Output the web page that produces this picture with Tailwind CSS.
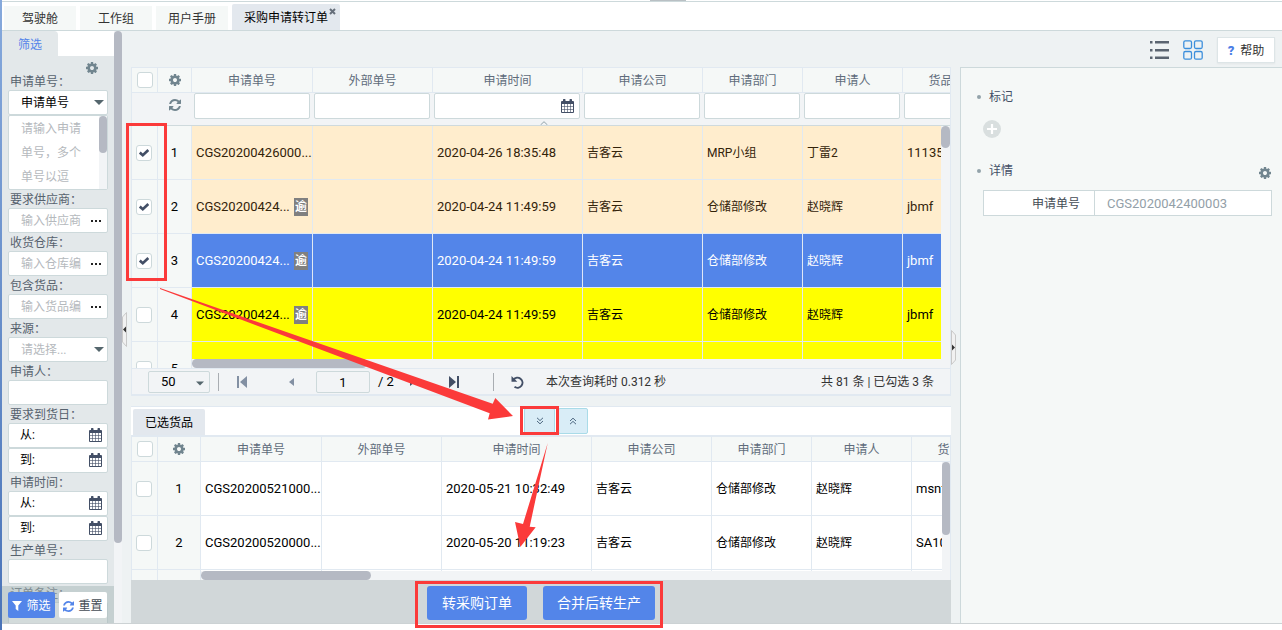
<!DOCTYPE html>
<html lang="zh-CN">
<head>
<meta charset="utf-8">
<title>采购申请转订单</title>
<script src="https://cdn.jsdelivr.net/npm/@tailwindcss/browser@4"></script>
</head>
<body class="relative flex h-screen flex-col overflow-hidden bg-white font-['Roboto','Noto_Sans_CJK_SC',sans-serif] text-xs leading-4 text-black">
<svg class="hidden" aria-hidden="true">
  <symbol id="cog" viewBox="0 128 1536 1536"><path fill="currentColor" d="M1024 896q0-106-75-181t-181-75-181 75-75 181 75 181 181 75 181-75 75-181zm512-109v222q0 12-8 23t-20 13l-185 28q-19 54-39 91 35 50 107 138 10 12 10 25t-9 23q-27 37-99 108t-94 71q-12 0-26-9l-138-108q-44 23-91 38-16 136-29 186-7 28-36 28h-222q-14 0-24.5-8.5t-11.5-21.5l-28-184q-49-16-90-37l-141 107q-10 9-25 9-14 0-25-11-126-114-165-168-7-10-7-23 0-12 8-23 15-21 51-66.5t54-70.5q-27-50-41-99l-183-27q-13-2-21-12.5t-8-23.5v-222q0-12 8-23t19-13l186-28q14-46 39-92-40-57-107-138-10-12-10-24 0-10 9-23 26-36 98.5-107.5t94.5-71.5q13 0 26 10l138 107q44-23 91-38 16-136 29-186 7-28 36-28h222q14 0 24.5 8.5t11.5 21.5l28 184q49 16 90 37l142-107q9-9 24-9 13 0 25 10 129 119 165 170 7 8 7 22 0 12-8 23-15 21-51 66.5t-54 70.5q26 50 41 98l183 28q13 2 21 12.5t8 23.5z"/></symbol>
  <symbol id="refresh" viewBox="128 128 1536 1536"><path fill="currentColor" d="M1639 1056q0 5-1 7-64 268-268 434.5t-478 166.5q-146 0-282.5-55t-243.5-157l-129 129q-19 19-45 19t-45-19-19-45v-448q0-26 19-45t45-19h448q26 0 45 19t19 45-19 45l-137 137q71 66 161 102t187 36q134 0 250-65t186-179q11-17 53-117 8-23 30-23h192q13 0 22.5 9.5t9.5 22.5zm25-800v448q0 26-19 45t-45 19h-448q-26 0-45-19t-19-45 19-45l138-138q-148-137-349-137-134 0-250 65t-186 179q-11 17-53 117-8 23-30 23h-199q-13 0-22.5-9.5t-9.5-22.5v-7q65-268 270-434.5t480-166.5q146 0 284 55.5t245 156.5l130-129q19-19 45-19t45 19 19 45z"/></symbol>
  <symbol id="cal" viewBox="0 0 13 14"><path fill="currentColor" fill-rule="evenodd" d="M2 2V1a1 1 0 0 1 2.500 0v1h4V1A1 1 0 0 1 11 1v1h1a1 1 0 0 1 1 1v10a1 1 0 0 1-1 1H1a1 1 0 0 1-1-1V3a1 1 0 0 1 1-1zM1 5v8h11V5z"/><path stroke="currentColor" stroke-opacity=".6" d="M3.500 5v8M6.500 5v8M9.500 5v8M1 7.500h11M1 10.500h11"/></symbol>
  <symbol id="caret" viewBox="0 0 10 5"><path fill="currentColor" d="M0 0h10L5 5z"/></symbol>
  <symbol id="check" viewBox="0 0 10 8"><path fill="none" stroke="currentColor" stroke-width="2.600" d="M.8 3.600 3.800 6.200 9.300 1"/></symbol>
  <symbol id="tri" viewBox="0 0 5 8"><path fill="currentColor" d="M5 0v8L0 4z"/></symbol>
  <symbol id="edge" viewBox="0 0 10 12"><path fill="currentColor" d="M0 0h2v12H0zM10 0v12L3 6z"/></symbol>
  <symbol id="chev" viewBox="0 0 8 8"><path fill="none" stroke="currentColor" d="M1 .8 4 3.600 7 .8M1 4 4 6.800 7 4"/></symbol>
</svg>

<div class="absolute inset-y-0 left-0 w-0.5 bg-linear-to-b from-[#86a9dc] to-[#4a74b8]"></div>
<div class="absolute top-0 left-[650px] z-10 h-px w-9 bg-[#b9c0c4]"></div>

<nav class="mt-px ml-0.5 flex h-[30px] shrink-0 items-end gap-1 border-t border-b border-[#cdd9db] pl-0.5 text-[#333]">
  <a href="#" class="flex h-6 w-[72px] items-center justify-center bg-[#f5f8f7] pt-0.5">驾驶舱</a>
  <a href="#" class="flex h-6 w-[72px] items-center justify-center bg-[#f5f8f7] pt-0.5">工作组</a>
  <a href="#" class="flex h-6 w-[72px] items-center justify-center bg-[#f5f8f7] pt-0.5">用户手册</a>
  <a href="#" class="relative flex h-[26px] w-[108px] items-center justify-center rounded-t-xs bg-[#e3e8ee] pt-0.5 text-black">采购申请转订单
    <svg class="absolute top-1 right-1 size-[7px] text-[#666f7a]" viewBox="0 0 7 7"><path stroke="currentColor" stroke-width="2" d="m1 1 5 5M6 1 1 6"/></svg></a>
</nav>

<div class="mb-1.5 ml-0.5 flex min-h-0 flex-1 border-b border-[#ccd2d4] bg-[#eef2f3]">
  <aside class="relative flex w-28 shrink-0 flex-col overflow-hidden bg-[#e3e8ea] text-[#57626e]">
    <div class="flex h-[25px] shrink-0 bg-white"><button class="w-14 rounded-tr-sm bg-[#e3e8ea] pt-0.5 text-[#5385e9]">筛选</button></div>
    <form class="flex shrink-0 flex-col px-1.5 [&_input]:min-w-0 [&_input]:flex-1 [&_input]:outline-none [&_label]:h-[18px] [&_label]:pl-0.5 [&_label]:leading-[21px]">
      <div class="flex h-4 items-end justify-end pr-2.5"><button type="button" aria-label="设置" class="h-3"><svg class="mt-0.5 size-3 text-[#71858f]"><use href="#cog"/></svg></button></div>
      <label for="f1">申请单号：</label>
      <div class="relative"><select id="f1" class="h-[25px] w-full appearance-none rounded-xs border border-[#cdd9db] bg-white pl-3 text-black"><option>申请单号</option></select><svg class="pointer-events-none absolute top-2.5 right-1 h-[5px] w-2.5 text-[#55666d]"><use href="#caret"/></svg></div>
      <div class="relative flex"><textarea aria-label="申请单号内容" class="h-[75px] w-full resize-none overflow-hidden rounded-xs border border-[#cdd9db] bg-white pt-px pl-3 leading-6 outline-none placeholder:text-[#b5b9bd]" placeholder="请输入申请&#10;单号，多个&#10;单号以逗"></textarea><div class="absolute inset-y-px right-px w-2 bg-[#f2f4f6]"><div class="h-[37px] rounded-full bg-[#b5b9c3]"></div></div></div>
      <label for="f2">要求供应商：</label>
      <div class="flex h-[25px] items-center rounded-xs border border-[#cdd9db] bg-white pr-1.5 pl-3"><input id="f2" class="placeholder:text-[#b5b9bd]" placeholder="输入供应商"><button type="button" aria-label="选择供应商" class="flex gap-0.5"><i class="size-0.5 bg-[#222]"></i><i class="size-0.5 bg-[#222]"></i><i class="size-0.5 bg-[#222]"></i></button></div>
      <label for="f3">收货仓库：</label>
      <div class="flex h-[25px] items-center rounded-xs border border-[#cdd9db] bg-white pr-1.5 pl-3"><input id="f3" class="placeholder:text-[#b5b9bd]" placeholder="输入仓库编"><button type="button" aria-label="选择仓库" class="flex gap-0.5"><i class="size-0.5 bg-[#222]"></i><i class="size-0.5 bg-[#222]"></i><i class="size-0.5 bg-[#222]"></i></button></div>
      <label for="f4">包含货品：</label>
      <div class="flex h-[25px] items-center rounded-xs border border-[#cdd9db] bg-white pr-1.5 pl-3"><input id="f4" class="placeholder:text-[#b5b9bd]" placeholder="输入货品编"><button type="button" aria-label="选择货品" class="flex gap-0.5"><i class="size-0.5 bg-[#222]"></i><i class="size-0.5 bg-[#222]"></i><i class="size-0.5 bg-[#222]"></i></button></div>
      <label for="f5">来源：</label>
      <div class="relative"><select id="f5" class="h-[25px] w-full appearance-none rounded-xs border border-[#cdd9db] bg-white pl-3 text-[#b5b9bd]"><option>请选择...</option></select><svg class="pointer-events-none absolute top-2.5 right-1 h-[5px] w-2.5 text-[#55666d]"><use href="#caret"/></svg></div>
      <label for="f6">申请人：</label>
      <div class="flex h-[25px] rounded-xs border border-[#cdd9db] bg-white px-3"><input id="f6"></div>
      <label for="f7">要求到货日：</label>
      <div class="flex h-[25px] items-center rounded-xs border border-[#cdd9db] bg-white pr-[5px] pb-px pl-[11px] text-black"><span>从:</span><input id="f7"><svg class="h-3.5 w-[13px] shrink-0 text-[#434f66]"><use href="#cal"/></svg></div>
      <div class="flex h-[25px] items-center rounded-xs border border-[#cdd9db] bg-white pr-[5px] pb-px pl-[11px] text-black"><span>到:</span><input aria-label="要求到货日到"><svg class="h-3.5 w-[13px] shrink-0 text-[#434f66]"><use href="#cal"/></svg></div>
      <label for="f8">申请时间：</label>
      <div class="flex h-[25px] items-center rounded-xs border border-[#cdd9db] bg-white pr-[5px] pb-px pl-[11px] text-black"><span>从:</span><input id="f8"><svg class="h-3.5 w-[13px] shrink-0 text-[#434f66]"><use href="#cal"/></svg></div>
      <div class="flex h-[25px] items-center rounded-xs border border-[#cdd9db] bg-white pr-[5px] pb-px pl-[11px] text-black"><span>到:</span><input aria-label="申请时间到"><svg class="h-3.5 w-[13px] shrink-0 text-[#434f66]"><use href="#cal"/></svg></div>
      <label for="f9">生产单号：</label>
      <div class="flex h-[25px] rounded-xs border border-[#cdd9db] bg-white px-3"><input id="f9"></div>
      <label for="f10">订单备注：</label>
      <div class="flex h-[25px] rounded-xs border border-[#cdd9db] bg-white px-3"><input id="f10"></div>
    </form>
    <div class="absolute inset-x-0 bottom-0 flex h-[37px] gap-1 bg-[#a7b8b8]/50 px-1.5 pt-1.5">
      <button class="flex h-[26px] w-[47px] items-center justify-center gap-1 rounded-xs bg-[#5385e9] pt-0.5 text-white"><svg class="h-2.5 w-2.5" viewBox="0 0 10 10"><path fill="currentColor" d="M0 0h10L6.300 4.500V10L3.700 8V4.500z"/></svg>筛选</button>
      <button class="flex h-[26px] w-12 items-center justify-center gap-1 rounded-xs bg-white pt-0.5 text-[#444c55]"><svg class="size-[11px] text-[#5385e9]"><use href="#refresh"/></svg>重置</button>
    </div>
  </aside>
  <div class="w-2 shrink-0 bg-[#f2f4f6]"><div class="h-[512px] rounded-full bg-[#b5b9c3]"></div></div>
  <div class="relative w-[9px] shrink-0">
    <svg class="absolute top-[281px] left-0 h-[35px] w-[5px]" viewBox="0 0 5 35"><path fill="#f1f1f1" stroke="#c8c8c8" d="M4.500.5v34L.5 30V5z"/><path fill="#333" d="M4 14.500v6l-3-3z"/></svg>
  </div>

  <div class="flex min-w-0 flex-1 flex-col">
    <div class="flex h-9 shrink-0 items-center justify-end pt-0.5 pr-[7px]">
      <button aria-label="列表视图"><svg class="h-[18px] w-[19px] text-[#5a6470]" viewBox="0 0 19 18"><path fill="currentColor" d="M0 0h2.500v2.500H0zM5 0h14v2.500H5zM0 8h2.500v2.500H0zM5 8h14v2.500H5zM0 15.500h2.500V18H0zM5 15.500h14V18H5z"/></svg></button>
      <button aria-label="卡片视图" class="ml-3.5"><svg class="size-5 text-[#3c8fdc]" viewBox="0 0 20 20" fill="none" stroke="currentColor" stroke-width="1.300"><rect x=".8" y=".8" width="7.700" height="7.700" rx="1.500"/><rect x="11.500" y=".8" width="7.700" height="7.700" rx="1.500"/><rect x=".8" y="11.500" width="7.700" height="7.700" rx="1.500"/><rect x="11.500" y="11.500" width="7.700" height="7.700" rx="1.500"/></svg></button>
      <button class="ml-3.5 flex h-[26px] w-[58px] items-center justify-center gap-1.5 border border-[#dde5e7] bg-white pt-0.5 text-[#333] shadow-xs"><b class="text-[13px] font-black text-[#4a7de6]">?</b>帮助</button>
    </div>
    <div class="flex min-h-0 flex-1">
      <main class="flex min-w-0 flex-1 flex-col">
        <section class="relative min-h-0 flex-1 overflow-hidden border-t border-r border-l border-[#e1e9f1] bg-[#f5f8f7]">
          <table class="w-[871px] table-fixed border-separate border-spacing-0 [&_tbody_td]:border-r [&_tbody_td]:border-b [&_tbody_td]:border-[#e1e9f1] [&_tbody_td:nth-child(n+3)]:pl-1 [&_th]:border-r [&_th]:border-b [&_th]:border-[#e1e9f1] [&_th]:font-normal [&_th]:text-[#5f6c7b] [&_th:nth-child(n+3)]:pt-0.5">
            <colgroup><col class="w-[26px]"><col class="w-[34px]"><col class="w-[121px]"><col class="w-[120px]"><col class="w-[150px]"><col class="w-[120px]"><col class="w-[100px]"><col class="w-[100px]"><col class="w-[100px]"></colgroup>
            <thead>
              <tr class="h-[25px]">
                <th class="p-0"><input type="checkbox" aria-label="全选" class="mx-auto block size-4 appearance-none rounded-[3px] border border-[#cdd9db] bg-white"></th>
                <th class="p-0"><svg class="mx-auto size-3 text-[#71858f]"><use href="#cog"/></svg></th>
                <th>申请单号</th><th>外部单号</th><th>申请时间</th><th>申请公司</th><th>申请部门</th><th>申请人</th><th>货品编号</th>
              </tr>
              <tr class="h-[33px] bg-[#f2f4f6] align-top [&_input]:h-[26px] [&_input]:w-full [&_input]:rounded-xs [&_input]:border [&_input]:border-[#cdd9db] [&_input]:bg-white [&_td]:border-b [&_td]:border-[#cfdadd] [&_td]:pr-[3px] [&_td]:pl-0.5 [&_td:nth-child(n+4)]:pl-px">
                <td></td>
                <td class="pt-1.5"><svg class="mx-auto size-3 text-[#71858f]"><use href="#refresh"/></svg></td>
                <td><input aria-label="申请单号"></td><td><input aria-label="外部单号"></td>
                <td class="relative"><input aria-label="申请时间"><svg class="absolute top-1.5 right-[9px] h-3.5 w-[13px] text-[#434f66]"><use href="#cal"/></svg><svg class="absolute bottom-0 left-[107px] h-1 w-2" viewBox="0 0 8 4"><path fill="none" stroke="#93a3aa" d="M.5 4 4 .7 7.500 4"/></svg></td>
                <td><input aria-label="申请公司"></td><td><input aria-label="申请部门"></td><td><input aria-label="申请人"></td><td><input aria-label="货品编号"></td>
              </tr>
            </thead>
            <tbody>
              <tr class="h-[54px] text-[#33230a] [&_td:nth-child(n+3)]:bg-[#ffedcd]">
                <td class="pr-0.5"><label class="relative mx-auto block size-4"><input type="checkbox" checked aria-label="选择第1行" class="block size-4 appearance-none rounded-[3px] border border-[#cdd9db] bg-white"><svg class="absolute top-1 left-[3px] h-2 w-2.5 text-[#434f66]"><use href="#check"/></svg></label></td>
                <td class="text-center text-[13px] text-black">1</td><td class="text-[13px]">CGS20200426000...</td><td></td><td class="text-[13px]">2020-04-26 18:35:48</td><td>吉客云</td><td>MRP小组</td><td>丁雷2</td><td class="text-[13px]">11135</td>
              </tr>
              <tr class="h-[54px] text-[#33230a] [&_td:nth-child(n+3)]:bg-[#ffedcd]">
                <td class="pr-0.5"><label class="relative mx-auto block size-4"><input type="checkbox" checked aria-label="选择第2行" class="block size-4 appearance-none rounded-[3px] border border-[#cdd9db] bg-white"><svg class="absolute top-1 left-[3px] h-2 w-2.5 text-[#434f66]"><use href="#check"/></svg></label></td>
                <td class="text-center text-[13px] text-black">2</td><td class="text-[13px]"><div class="flex items-center justify-between pr-1">CGS20200424...<span class="w-3.5 bg-[#808080] text-center text-xs leading-[18px] font-bold text-white">逾</span></div></td><td></td><td class="text-[13px]">2020-04-24 11:49:59</td><td>吉客云</td><td>仓储部修改</td><td>赵晓辉</td><td class="text-[13px]">jbmf</td>
              </tr>
              <tr class="h-[54px] text-white [&_td:nth-child(n+3)]:bg-[#5385e9]">
                <td class="pr-0.5"><label class="relative mx-auto block size-4"><input type="checkbox" checked aria-label="选择第3行" class="block size-4 appearance-none rounded-[3px] border border-[#cdd9db] bg-white"><svg class="absolute top-1 left-[3px] h-2 w-2.5 text-[#434f66]"><use href="#check"/></svg></label></td>
                <td class="text-center text-[13px] text-black">3</td><td class="text-[13px]"><div class="flex items-center justify-between pr-1">CGS20200424...<span class="w-3.5 bg-[#808080] text-center text-xs leading-[18px] font-bold text-white">逾</span></div></td><td></td><td class="text-[13px]">2020-04-24 11:49:59</td><td>吉客云</td><td>仓储部修改</td><td>赵晓辉</td><td class="text-[13px]">jbmf</td>
              </tr>
              <tr class="h-[54px] [&_td:nth-child(n+3)]:bg-[#ffff00]">
                <td class="pr-0.5"><input type="checkbox" aria-label="选择第4行" class="mx-auto block size-4 appearance-none rounded-[3px] border border-[#cdd9db] bg-white"></td>
                <td class="text-center text-[13px]">4</td><td class="text-[13px]"><div class="flex items-center justify-between pr-1">CGS20200424...<span class="w-3.5 bg-[#808080] text-center text-xs leading-[18px] font-bold text-white">逾</span></div></td><td></td><td class="text-[13px]">2020-04-24 11:49:59</td><td>吉客云</td><td>仓储部修改</td><td>赵晓辉</td><td class="text-[13px]">jbmf</td>
              </tr>
              <tr class="h-[54px] [&_td:nth-child(n+3)]:bg-[#ffff00]">
                <td class="pr-0.5"><input type="checkbox" aria-label="选择第5行" class="mx-auto block size-4 appearance-none rounded-[3px] border border-[#cdd9db] bg-white"></td>
                <td class="text-center text-[13px]">5</td><td></td><td></td><td></td><td></td><td></td><td></td><td></td>
              </tr>
            </tbody>
          </table>
          <div class="absolute top-[58px] right-0 bottom-0 w-[9px] bg-[#f2f4f6]"><div class="h-[22px] rounded-full bg-[#b5b9c3]"></div></div>
          <div class="absolute right-0 bottom-0 left-[60px] h-[9px] bg-[#f2f4f6]"><div class="h-full w-[175px] rounded-full bg-[#b5b9c3]"></div></div>
        </section>
        <div class="flex h-7 shrink-0 items-center border border-b-2 border-[#e1e9f1] bg-[#f2f4f6] pt-px pr-4 pl-4 text-[#333]">
          <div class="relative"><select aria-label="每页条数" class="h-[22px] w-[62px] appearance-none rounded-xs border border-[#cdd9db] pl-3 text-[13px] text-black"><option>50</option></select><svg class="pointer-events-none absolute top-2.5 right-1.5 h-[5px] w-2 text-[#55666d]"><use href="#caret"/></svg></div>
          <div class="ml-2 h-[18px] w-px bg-[#a9adb2]"></div>
          <button aria-label="首页" class="ml-[18px] text-[#8390a3]"><svg class="h-3 w-2.5"><use href="#edge"/></svg></button>
          <button aria-label="上一页" class="ml-[42px] text-[#8390a3]"><svg class="h-2 w-[5px]"><use href="#tri"/></svg></button>
          <input aria-label="页码" value="1" class="ml-[22px] h-[22px] w-[54px] rounded-xs border border-[#cdd9db] text-center text-[13px] text-black">
          <span class="ml-2 w-8 text-[13px] text-black">/ 2</span>
          <button aria-label="下一页" class="rotate-180 text-[#434f66]"><svg class="h-2 w-[5px]"><use href="#tri"/></svg></button>
          <button aria-label="末页" class="ml-[34px] rotate-180 text-[#434f66]"><svg class="h-3 w-2.5"><use href="#edge"/></svg></button>
          <div class="ml-[34px] h-[18px] w-px bg-[#a9adb2]"></div>
          <button aria-label="刷新" class="ml-[17px] text-[#434f66]"><svg class="h-[13px] w-[13px]" viewBox="0 0 13 13"><path fill="none" stroke="currentColor" stroke-width="2" d="M2.500 3.700A5 5 0 1 1 3.500 10.800"/><path fill="currentColor" d="M.5 0v5.800h5.800z"/></svg></button>
          <span class="ml-[22px]">本次查询耗时 0.312 秒</span>
          <span class="ml-auto">共 81 条 | 已勾选 3 条</span>
        </div>
        <div class="relative mt-2.5 flex h-[31px] shrink-0 items-end border-t border-b-2 border-[#e1e9f1] bg-white pl-0.5">
          <button class="h-[26px] w-[72px] rounded-t-xs bg-[#e3e8ee] pt-0.5">已选货品</button>
          <button aria-label="向下加入" class="absolute top-px left-[393px] flex h-[26px] w-[31px] items-center justify-center rounded-xs border border-[#a9dbe8] bg-[#d9edf7] text-[#4d6780]"><svg class="size-2"><use href="#chev"/></svg></button>
          <button aria-label="向上移除" class="absolute top-px left-[427px] flex h-[26px] w-[30px] items-center justify-center rounded-xs border border-[#a9dbe8] bg-[#d9edf7] text-[#4d6780]"><svg class="size-2 rotate-180"><use href="#chev"/></svg></button>
        </div>
        <section class="relative h-[143px] shrink-0 overflow-hidden border-r border-l border-[#e1e9f1] bg-[#f5f8f7]">
          <table class="w-[880px] table-fixed border-separate border-spacing-0 [&_td]:border-r [&_td]:border-b [&_td]:border-[#e1e9f1] [&_td:nth-child(n+3)]:bg-white [&_td:nth-child(n+3)]:pl-1 [&_th]:border-r [&_th]:border-b [&_th]:border-[#e1e9f1] [&_th]:font-normal [&_th]:text-[#5f6c7b] [&_th:nth-child(n+3)]:pt-0.5">
            <colgroup><col class="w-[26px]"><col class="w-[43px]"><col class="w-[121px]"><col class="w-[120px]"><col class="w-[150px]"><col class="w-[120px]"><col class="w-[100px]"><col class="w-[100px]"><col class="w-[100px]"></colgroup>
            <thead><tr class="h-[25px]">
              <th class="p-0"><input type="checkbox" aria-label="全选已选货品" class="mx-auto block size-4 appearance-none rounded-[3px] border border-[#cdd9db] bg-white"></th>
              <th class="p-0"><svg class="mx-auto size-3 text-[#71858f]"><use href="#cog"/></svg></th>
              <th>申请单号</th><th>外部单号</th><th>申请时间</th><th>申请公司</th><th>申请部门</th><th>申请人</th><th>货品编号</th>
            </tr></thead>
            <tbody>
              <tr class="h-[54px]"><td class="pr-0.5"><input type="checkbox" aria-label="选择货品1" class="mx-auto block size-4 appearance-none rounded-[3px] border border-[#cdd9db] bg-white"></td><td class="text-center text-[13px]">1</td><td class="text-[13px]">CGS20200521000...</td><td></td><td class="text-[13px]">2020-05-21 10:32:49</td><td>吉客云</td><td>仓储部修改</td><td>赵晓辉</td><td class="text-[13px]">msnf</td></tr>
              <tr class="h-[54px]"><td class="pr-0.5"><input type="checkbox" aria-label="选择货品2" class="mx-auto block size-4 appearance-none rounded-[3px] border border-[#cdd9db] bg-white"></td><td class="text-center text-[13px]">2</td><td class="text-[13px]">CGS20200520000...</td><td></td><td class="text-[13px]">2020-05-20 11:19:23</td><td>吉客云</td><td>仓储部修改</td><td>赵晓辉</td><td class="text-[13px]">SA10</td></tr>
              <tr class="h-[54px]"><td></td><td></td><td></td><td></td><td></td><td></td><td></td><td></td><td></td></tr>
            </tbody>
          </table>
          <div class="absolute top-[25px] right-0 bottom-0 w-2 bg-[#f2f4f6]"><div class="h-[73px] rounded-full bg-[#b5b9c3]"></div></div>
          <div class="absolute right-0 bottom-0 left-[69px] h-[9px] bg-[#f2f4f6]"><div class="h-full w-[170px] rounded-full bg-[#b5b9c3]"></div></div>
        </section>
        <div class="flex h-[43px] shrink-0 items-start justify-center gap-4 bg-[#d1d7d9] pt-1.5 text-sm text-white">
          <button class="h-[34px] w-[100px] rounded-[3px] bg-[#5385e9]">转采购订单</button>
          <button class="h-[34px] w-28 rounded-[3px] bg-[#5385e9]">合并后转生产</button>
        </div>
      </main>
      <div class="relative w-[9px] shrink-0">
        <svg class="absolute top-[263px] left-0 h-[35px] w-[5px]" viewBox="0 0 5 35"><path fill="#f1f1f1" stroke="#c8c8c8" d="M.5.5v34l4-4.500V5z"/><path fill="#333" d="M1 14.500v6l3-3z"/></svg>
      </div>
      <aside class="w-[322px] shrink-0 border-t border-l border-[#cdd9db] bg-[#f5f8f7] pt-[21px] pr-2.5 pl-4 text-[#434f66]">
        <h2 class="flex items-center gap-2"><i class="size-1 rounded-full bg-[#93a3aa]"></i>标记</h2>
        <button aria-label="添加标记" class="mt-[15px] ml-1.5 block"><svg class="size-[18px]" viewBox="0 0 18 18"><circle cx="9" cy="9" r="9" fill="#d9dfdf"/><path stroke="#fff" stroke-width="2.200" d="M9 4v10M4 9h10"/></svg></button>
        <div class="mt-[25px] flex h-4 justify-between"><h2 class="flex items-center gap-2"><i class="size-1 rounded-full bg-[#93a3aa]"></i>详情</h2><button aria-label="详情设置" class="mr-px pt-1"><svg class="size-3 text-[#71858f]"><use href="#cog"/></svg></button></div>
        <dl class="mt-[11px] ml-1.5 flex h-[26px] items-stretch border border-[#cdd9db] bg-white leading-[26px]"><dt class="w-[111px] border-r border-[#cdd9db] pr-3.5 text-right text-[#444c55]">申请单号</dt><dd class="pl-3 text-[13px] text-[#93a0a8]">CGS2020042400003</dd></dl>
      </aside>
    </div>
  </div>
</div>

<svg class="pointer-events-none absolute top-0 left-0 h-[630px] w-[1282px]" viewBox="0 0 1282 630" aria-hidden="true">
  <g fill="none" stroke="#fb3a3a" stroke-width="3"><path d="M127.500 124.500h38v155h-38zM521.500 407.500h36v26h-36zM416.500 582.500h245v44h-245z"/></g>
  <path fill="#fb3a3a" d="M160 288 492.700 403.700 495.300 398 513 416 488 419.500 489.700 413.300 160 289zM547.700 443 529.700 526.700 535.700 527.300 520.300 547 515 522 523 524z"/>
</svg>
</body>
</html>
